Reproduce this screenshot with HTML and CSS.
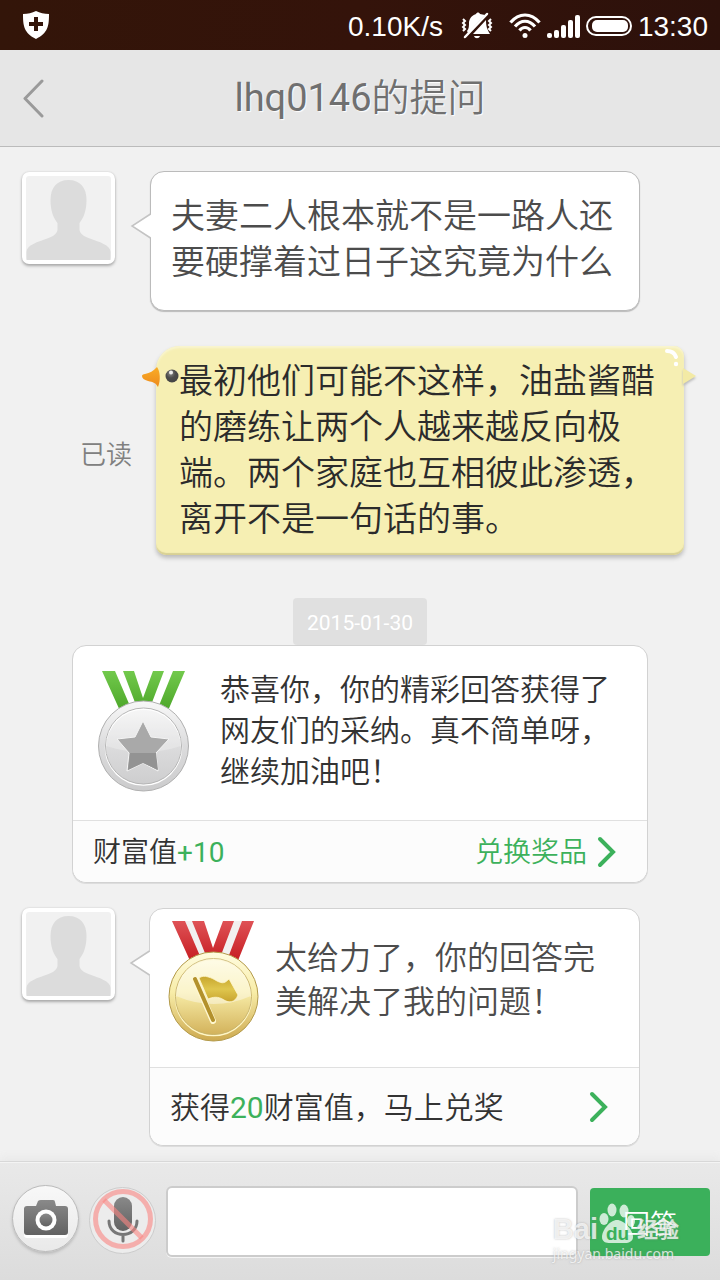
FILE: index.html
```html
<!DOCTYPE html>
<html lang="zh-CN">
<head>
<meta charset="utf-8">
<meta name="viewport" content="width=device-width, initial-scale=1">
<title>lhq0146的提问</title>
<link rel="stylesheet" href="styles.css">
</head>
<body>
<svg class="defs" width="0" height="0" aria-hidden="true">
  <defs>
    <linearGradient id="green" x1="0" y1="0" x2="0" y2="1"><stop offset="0" stop-color="#72c94c"/><stop offset="1" stop-color="#4aa427"/></linearGradient>
    <linearGradient id="red" x1="0" y1="0" x2="0" y2="1"><stop offset="0" stop-color="#df5256"/><stop offset="1" stop-color="#c51a1f"/></linearGradient>
    <linearGradient id="silver" x1="0" y1="0" x2="0" y2="1"><stop offset="0" stop-color="#f8f8f8"/><stop offset=".5" stop-color="#dcdcdd"/><stop offset="1" stop-color="#cbcbcc"/></linearGradient>
    <linearGradient id="gold" x1="0" y1="0" x2="0" y2="1"><stop offset="0" stop-color="#fffce0"/><stop offset=".45" stop-color="#f8eda8"/><stop offset="1" stop-color="#cda94f"/></linearGradient>
    <linearGradient id="flag" x1="0" y1="0" x2="0" y2="1"><stop offset="0" stop-color="#c7a62e"/><stop offset=".5" stop-color="#dfc64e"/><stop offset="1" stop-color="#c8a42f"/></linearGradient>
    <linearGradient id="glyph" x1="0" y1="0" x2="0" y2="1"><stop offset="0" stop-color="#898989"/><stop offset="1" stop-color="#626262"/></linearGradient>
    <linearGradient id="beak" x1="0" y1="0" x2="0" y2="1"><stop offset="0" stop-color="#f9ad27"/><stop offset="1" stop-color="#ee8a1c"/></linearGradient>
    <radialGradient id="eye" cx=".4" cy=".3" r=".7"><stop offset="0" stop-color="#8a8a8a"/><stop offset=".5" stop-color="#4c4c4c"/><stop offset="1" stop-color="#444"/></radialGradient>
    <symbol id="person" viewBox="0 0 84 84">
      <path fill="#dcdcdc" d="M42 4c-12 0-18 8-18 20 0 11 3 18 7 23v7c-1 4-4 6-9 8C11 66 0 69 0 76v8h84v-8c0-7-11-10-22-14-5-2-8-4-9-8v-7c4-5 7-12 7-23C60 12 54 4 42 4z"/>
    </symbol>
    <symbol id="tail" viewBox="0 0 22 28">
      <path fill="#fff" d="M22 2 2 14 22 26z"/>
      <path fill="none" stroke="#c4c4c4" stroke-width="1.500" d="M20.500 2 2 14 20.500 26"/>
    </symbol>
    <symbol id="next" viewBox="0 0 20 32">
      <path fill="none" stroke="#3cb15b" stroke-width="4" stroke-linecap="round" d="M3 3 16 16 3 29"/>
    </symbol>
  </defs>
</svg>

<div class="app">
  <div class="status">
    <svg class="shield" width="28" height="30" viewBox="0 0 28 30"><path fill="#fff" d="M14 1c4 2 8 3 13 3 0 12-1 19-13 25C2 23 1 16 1 4c5 0 9-1 13-3z"/><path stroke="#331409" stroke-width="4" d="M14 7v14M7 14h14"/></svg>
    <span class="speed">0.10K/s</span>
    <svg class="silent" width="32" height="28" viewBox="0 0 32 28"><path fill="#fff" d="M6 19c2-2 2-5 2-9 1-5 4-7 7-8 1-2 3-2 4 0l5 1L7 21zM25 8c0 6 1 9 4 14H12zM13 24h6c-1 3-5 3-6 0z"/><path stroke="#fff" stroke-width="2.500" stroke-linecap="round" d="M26 2 4 25"/><path fill="none" stroke="#fff" stroke-width="2" d="m2 7 2 2-2 2 2 2-2 2 2 2-2 2M30 7l-2 2 2 2-2 2 2 2-2 2 2 2"/></svg>
    <svg class="wifi" width="32" height="26" viewBox="0 0 32 26"><g fill="none" stroke="#fff" stroke-width="3.200"><path d="M1.500 9.500C10-.5 22-.5 30.500 9.500"/><path d="M6 13.500c6-7 14-7 20 0"/><path d="M10.500 17.500c3-4 8-4 11 0"/></g><circle cx="16" cy="22.500" r="2.500" fill="#fff"/></svg>
    <svg class="signal" width="34" height="26" viewBox="0 0 34 26"><g fill="#fff"><rect x="0" y="20" width="5" height="5" rx="2"/><rect x="7" y="17" width="5" height="8" rx="2"/><rect x="14" y="12" width="5" height="13" rx="2"/><rect x="21" y="7" width="5" height="18" rx="2"/><rect x="28" y="2" width="5" height="23" rx="2"/></g></svg>
    <svg class="battery" width="46" height="20" viewBox="0 0 46 20"><rect x="1" y="1" width="44" height="18" rx="9" fill="none" stroke="#fff" stroke-width="2"/><rect x="6" y="4" width="36" height="12" rx="5" fill="#fff"/></svg>
    <time class="clock">13:30</time>
  </div>

  <header class="header">
    <button class="back" type="button" aria-label="返回"><svg width="24" height="40" viewBox="0 0 24 40"><path fill="none" stroke="#9a9a9a" stroke-width="3" stroke-linecap="round" stroke-linejoin="round" d="M20 3 3 20.500 20 38"/></svg></button>
    <h1 class="title"><span class="user">lhq0146</span>的提问</h1>
  </header>

  <main class="chat">
    <article class="row">
      <div class="avatar"><svg width="85" height="84"><use href="#person"/></svg></div>
      <div class="bubble question">
        <svg class="tail" width="22" height="28" aria-hidden="true"><use href="#tail"/></svg>
        <p class="text">夫妻二人根本就不是一路人还要硬撑着过日子这究竟为什么</p>
      </div>
    </article>

    <article class="row mine">
      <span class="read">已读</span>
      <div class="duck">
        <svg class="beak" width="40" height="26" viewBox="0 0 40 26" aria-hidden="true"><path fill="url(#beak)" d="M1 10c0-1 1-2 3-2 5-1 8-3 12-7 3 4 4 13 1 20-2-4-5-5-10-6-4-1-6-3-6-5z"/><circle cx="31" cy="10" r="6.500" fill="url(#eye)"/><circle cx="30" cy="6.500" r="2" fill="#eee"/></svg>
        <svg class="shine" width="16" height="20" viewBox="0 0 16 20" aria-hidden="true"><path fill="none" stroke="#fff" stroke-width="4" stroke-linecap="round" d="M3 3q7 0 9 6"/><circle cx="12" cy="16" r="2.200" fill="#fff"/></svg>
        <svg class="wing" width="14" height="20" viewBox="0 0 14 20" aria-hidden="true"><path fill="#f3eaa5" d="M0 2 13 10 0 18z"/></svg>
        <p class="text">最初他们可能不这样，油盐酱醋的磨练让两个人越来越反向极端。两个家庭也互相彼此渗透，离开不是一句话的事。</p>
      </div>
    </article>

    <time class="date">2015-01-30</time>

    <article class="card notice">
      <div class="body">
        <svg class="medal" width="92" height="124" viewBox="0 0 92 124" aria-hidden="true">
          <path fill="#fff" d="M4 2h84L66 46H26z"/>
          <path fill="url(#green)" d="M4 2h13l18 42H23zM25 2h11l9 27 10-27h11L50 44h-9zM75 2h12L69 44H58z"/>
          <circle cx="45.500" cy="77" r="45" fill="url(#silver)" stroke="#b0b0b0"/>
          <circle cx="45.500" cy="78" r="38" fill="none" stroke="#fff" stroke-width="1.500"/>
          <circle cx="45.500" cy="77" r="38" fill="none" stroke="#b5b5b5"/>
          <path fill="#fff" fill-opacity=".25" d="M8 77a37.500 37.500 0 0 1 75 0q-37 12-75 0z"/>
          <path fill="#a9a9a9" stroke="#f5f5f5" d="m45 52 8 16 18 2-13 14 2 18-15-8-16 8 2-18-12-14 18-2z"/>
          <path fill="#939393" d="M32 84h26l2 17-15-7-15 7z"/>
        </svg>
        <p class="text">恭喜你，你的精彩回答获得了网友们的采纳。真不简单呀，继续加油吧！</p>
      </div>
      <div class="foot">
        <span>财富值<b class="num">+10</b></span>
        <a class="exchange" href="#">兑换奖品<svg width="20" height="32" aria-hidden="true"><use href="#next"/></svg></a>
      </div>
    </article>

    <article class="row thanks">
      <div class="avatar"><svg width="85" height="84"><use href="#person"/></svg></div>
      <div class="card reward">
        <svg class="tail" width="22" height="28" aria-hidden="true"><use href="#tail"/></svg>
        <div class="body">
          <svg class="medal" width="92" height="124" viewBox="0 0 92 124" aria-hidden="true">
            <path fill="#f2f0f0" d="M4 2h82L64 46H26z"/>
            <path fill="#fff" d="M34 0h22L45 30z"/>
            <path fill="url(#red)" d="M4 2h13l18 42H23zM24 2h12l9 27 10-27h11L50 44h-9zM74 2h12L69 44H58z"/>
            <circle cx="45.500" cy="77.500" r="44.500" fill="url(#gold)" stroke="#b39a4a"/>
            <circle cx="45.500" cy="78.500" r="38" fill="none" stroke="#fff6c5" stroke-width="1.500"/>
            <circle cx="45.500" cy="77.500" r="38" fill="none" stroke="#c9b46a"/>
            <path fill="#fff" fill-opacity=".4" d="M8 77a37.500 37.500 0 0 1 75 0q-37 16-75 0z"/>
            <path stroke="#fff7cf" stroke-width="6" stroke-linecap="round" d="m27 61 18 41"/>
            <path stroke="#b3912c" stroke-width="4" stroke-linecap="round" d="m27 60 18 41"/>
            <path fill="url(#flag)" stroke="#fff7cf" stroke-width=".8" d="M31 59c5-4 13 0 18 3 6 3 8 2 12-2l9 16c-3 8-9 8-14 5-6-4-11-3-16-1z"/>
          </svg>
          <p class="text">太给力了，你的回答完美解决了我的问题！</p>
        </div>
        <a class="foot" href="#"><span>获得<b class="num">20</b>财富值，马上兑奖</span><svg width="20" height="32" aria-hidden="true"><use href="#next"/></svg></a>
      </div>
    </article>
  </main>

  <form class="composer">
    <button class="round camera" type="button" aria-label="拍照">
      <svg width="48" height="42" viewBox="0 0 48 42"><path fill="#fff" transform="translate(0 3)" d="M6 8h8l2-5q1-1 3-1h12q2 0 2 2l1 4h9q3 0 3 3v23q0 3-3 3H5q-3 0-3-3V11q0-3 3-3z"/><path fill="url(#glyph)" d="M6 8h8l2-5q1-1 3-1h12q2 0 2 2l1 4h9q3 0 3 3v23q0 3-3 3H5q-3 0-3-3V11q0-3 3-3z"/><circle cx="24" cy="22" r="10.500" fill="#fff"/><circle cx="24" cy="22" r="6.500" fill="url(#glyph)"/></svg>
    </button>
    <button class="round muted" type="button" aria-label="语音">
      <svg width="62" height="62" viewBox="0 0 62 62"><rect x="22" y="8" width="18" height="34" rx="9" fill="url(#glyph)"/><path fill="none" stroke="#777" stroke-width="3" stroke-linecap="round" d="M17 32c0 18 28 18 28 0M31 46v6"/><g fill="none" stroke="#fa8582" stroke-opacity=".6" stroke-width="5"><circle cx="31" cy="30" r="27.500"/><path d="m12 11 38 38"/></g></svg>
    </button>
    <input class="field" type="text" aria-label="回答内容">
    <button class="send" type="submit">回答</button>
    <div class="mark">
      <div class="brand"><span class="bai">Bai</span><svg class="paw" width="37" height="41" viewBox="0 0 37 41" aria-hidden="true"><g fill="#fff" fill-opacity=".75"><ellipse cx="6" cy="16" rx="4.500" ry="6"/><ellipse cx="14" cy="7" rx="4.500" ry="6.500"/><ellipse cx="26" cy="8" rx="4.500" ry="6.500"/><ellipse cx="33" cy="18" rx="4" ry="6"/><path d="M19 17c-7 0-15 10-15 17 0 5 4 6 8 6h15c4 0 8-2 8-6 0-7-9-17-16-17z"/></g><text class="du" x="8" y="37">du</text></svg><span class="jing">经验</span></div>
      <div class="site">jingyan.baidu.com</div>
    </div>
  </form>
</div>
</body>
</html>
```
FILE: styles.css
```css
* { box-sizing: border-box; }

body {
  margin: 0;
  background: #f1f1f1;
  color: #333;
  font-family: Roboto, "Noto Sans CJK SC", sans-serif;
  font-weight: 350;
}

h1, p { margin: 0; }
a { color: inherit; text-decoration: none; }
button { border: 0; padding: 0; font: inherit; cursor: pointer; }
svg { display: block; flex: none; }
.defs { position: absolute; }

.app {
  display: flex;
  flex-direction: column;
  min-height: 100vh;
}

.status {
  display: flex;
  align-items: center;
  height: 50px;
  padding: 0 12px 0 22px;
  background: linear-gradient(90deg, #331509, #34130a 50%, #2d110b);
  color: #fff;
  font-family: "Liberation Sans", Arial, sans-serif;
  font-size: 28px;
  line-height: 50px;
}
.speed { margin-left: auto; padding-top: 4px; }
.silent { margin-left: 18px; }
.wifi { margin-left: 16px; }
.signal { margin-left: 6px; }
.battery { margin-left: 5px; }
.clock { margin-left: 6px; padding-top: 4px; }
.silent, .wifi, .signal, .battery { margin-top: 2px; }

.header {
  display: grid;
  grid-template-columns: 60px 1fr 60px;
  align-items: center;
  height: 97px;
  border-bottom: 1px solid #bbb;
  background: #e6e6e6;
}
.back {
  display: flex;
  padding-left: 22px;
  background: none;
}
.title {
  color: #707070;
  font-size: 38px;
  font-weight: 350;
  line-height: 50px;
  text-align: center;
  text-shadow: 1px 1px 1px #fff;
}
.user { font-weight: 400; }

.chat {
  flex: 1;
  display: flex;
  flex-direction: column;
  padding: 24px 0 15px;
}

.row {
  display: flex;
  align-items: flex-start;
  gap: 35px;
  padding: 0 80px 0 22px;
}
.avatar {
  flex: none;
  margin-top: 1px;
  border: 4px solid #fff;
  border-radius: 7px;
  background: #f1f1f1;
  box-shadow: 0 2px 3px #aaa, 0 0 2px #ccc;
}

.bubble {
  position: relative;
  flex: 1;
  padding: 21px 20px 25px;
  border: 1px solid #bbb;
  border-radius: 14px;
  background: #fff;
  box-shadow: 0 1px 1px #bbb;
}
.bubble .text, .duck .text {
  font-size: 34px;
  line-height: 46px;
}
.question .text { color: #4c4c4c; }
.tail {
  position: absolute;
  top: 40px;
  left: -21px;
}

.mine {
  align-items: center;
  justify-content: flex-end;
  gap: 24px;
  margin-top: 35px;
  padding: 0 36px 0 80px;
}
.read {
  flex: none;
  padding-top: 4px;
  color: #808080;
  font-size: 26px;
}
.duck {
  position: relative;
  flex: 1;
  padding: 12px 22px 13px 23px;
  border-radius: 24px 10px 10px 10px;
  background: #f6efb3;
  box-shadow: 0 3px 4px #bbb, inset 0 2px 2px #f9f5d0, inset 0 -2px 1px #d8d094;
  color: #2b2b2b;
}
.beak { position: absolute; top: 20px; left: -15px; }
.shine { position: absolute; top: 2px; right: 4px; }
.wing { position: absolute; top: 20px; right: -13px; filter: drop-shadow(0 2px 1px #bbb); }

.date {
  align-self: center;
  margin-top: 43px;
  padding: 3px 14px 0;
  border-radius: 4px;
  background: #e0e0e0;
  color: #fff;
  font-size: 21px;
  font-weight: 400;
  line-height: 44px;
}

.card {
  border: 1px solid #d2d2d2;
  border-radius: 14px;
  background: #fff;
  box-shadow: 0 1px 0 #ddd;
}
.body {
  display: flex;
  align-items: flex-start;
}
.foot {
  display: flex;
  align-items: center;
  justify-content: space-between;
  border-top: 1px solid #e0e0e0;
  border-radius: 0 0 14px 14px;
  background: #fcfcfc;
}
.foot span { padding-top: 2px; }
.num {
  color: #3cb15b;
  font-weight: 400;
}

.notice { margin: 0 72px; }
.notice .body {
  gap: 30px;
  min-height: 174px;
  padding: 23px 34px 0 25px;
}
.notice .text {
  font-size: 30px;
  line-height: 41px;
}
.notice .foot {
  padding: 0 30px 0 20px;
  font-size: 28px;
  line-height: 59px;
}
.exchange {
  display: flex;
  align-items: center;
  gap: 10px;
  padding-top: 2px;
  color: #3cb15b;
}
.exchange svg { margin-bottom: 2px; }

.thanks {
  gap: 34px;
  margin-top: 25px;
}
.thanks .avatar { margin-top: 0; }
.reward {
  position: relative;
  flex: 1;
}
.reward .body {
  gap: 15px;
  min-height: 158px;
  padding: 10px 30px 0 18px;
}
.reward .text {
  padding-top: 17px;
  color: #4c4c4c;
  font-size: 32px;
  line-height: 44px;
}
.reward .foot {
  padding: 0 30px 0 20px;
  font-size: 30px;
  line-height: 75px;
}

.composer {
  position: relative;
  display: flex;
  align-items: center;
  gap: 10px;
  height: 119px;
  padding: 0 10px 0 12px;
  border-top: 1px solid #d8d8d8;
  background: linear-gradient(#e9e9e9, #dcdcdc);
  box-shadow: inset 0 1px 0 #f4f4f4, 0 -4px 8px #e9e9e9;
}
.round {
  display: flex;
  align-items: center;
  justify-content: center;
  flex: none;
  width: 67px;
  height: 67px;
  border: 1px solid #bbb;
  border-radius: 50%;
  background: linear-gradient(#f8f8f8, #e9e9e9);
  box-shadow: 0 2px 3px #bbb;
}
.camera { margin-bottom: 5px; }
.muted {
  margin-bottom: 2px;
  border-color: #ccc;
  background: #ececec;
  box-shadow: none;
}
.field {
  flex: 1;
  min-width: 0;
  height: 71px;
  padding: 0 14px;
  border: 2px solid #ccc;
  border-radius: 6px;
  background: #fff;
  box-shadow: 0 1px 0 #f5f5f5;
  font: inherit;
  font-size: 30px;
}
.send {
  flex: none;
  width: 120px;
  height: 68px;
  margin: 2px 0 0 2px;
  border-radius: 4px;
  background: #3bb05b;
  color: #fff;
  font-size: 27px;
}

.mark {
  position: absolute;
  right: 41px;
  bottom: 16px;
  color: rgba(255, 255, 255, .75);
  text-shadow: 0 0 2px rgba(120, 120, 120, .5);
  pointer-events: none;
}
.brand {
  display: flex;
  align-items: flex-end;
}
.bai {
  font: bold 29px/30px "Liberation Sans", Arial, sans-serif;
}
.du {
  fill: #3bb05b;
  font: bold 19px "Liberation Sans", Arial, sans-serif;
  text-shadow: none;
}
.jing {
  margin-left: 2px;
  font-size: 21px;
  font-weight: 700;
  line-height: 28px;
}
.site {
  font: 14px/20px "Noto Sans", sans-serif;
}
```
